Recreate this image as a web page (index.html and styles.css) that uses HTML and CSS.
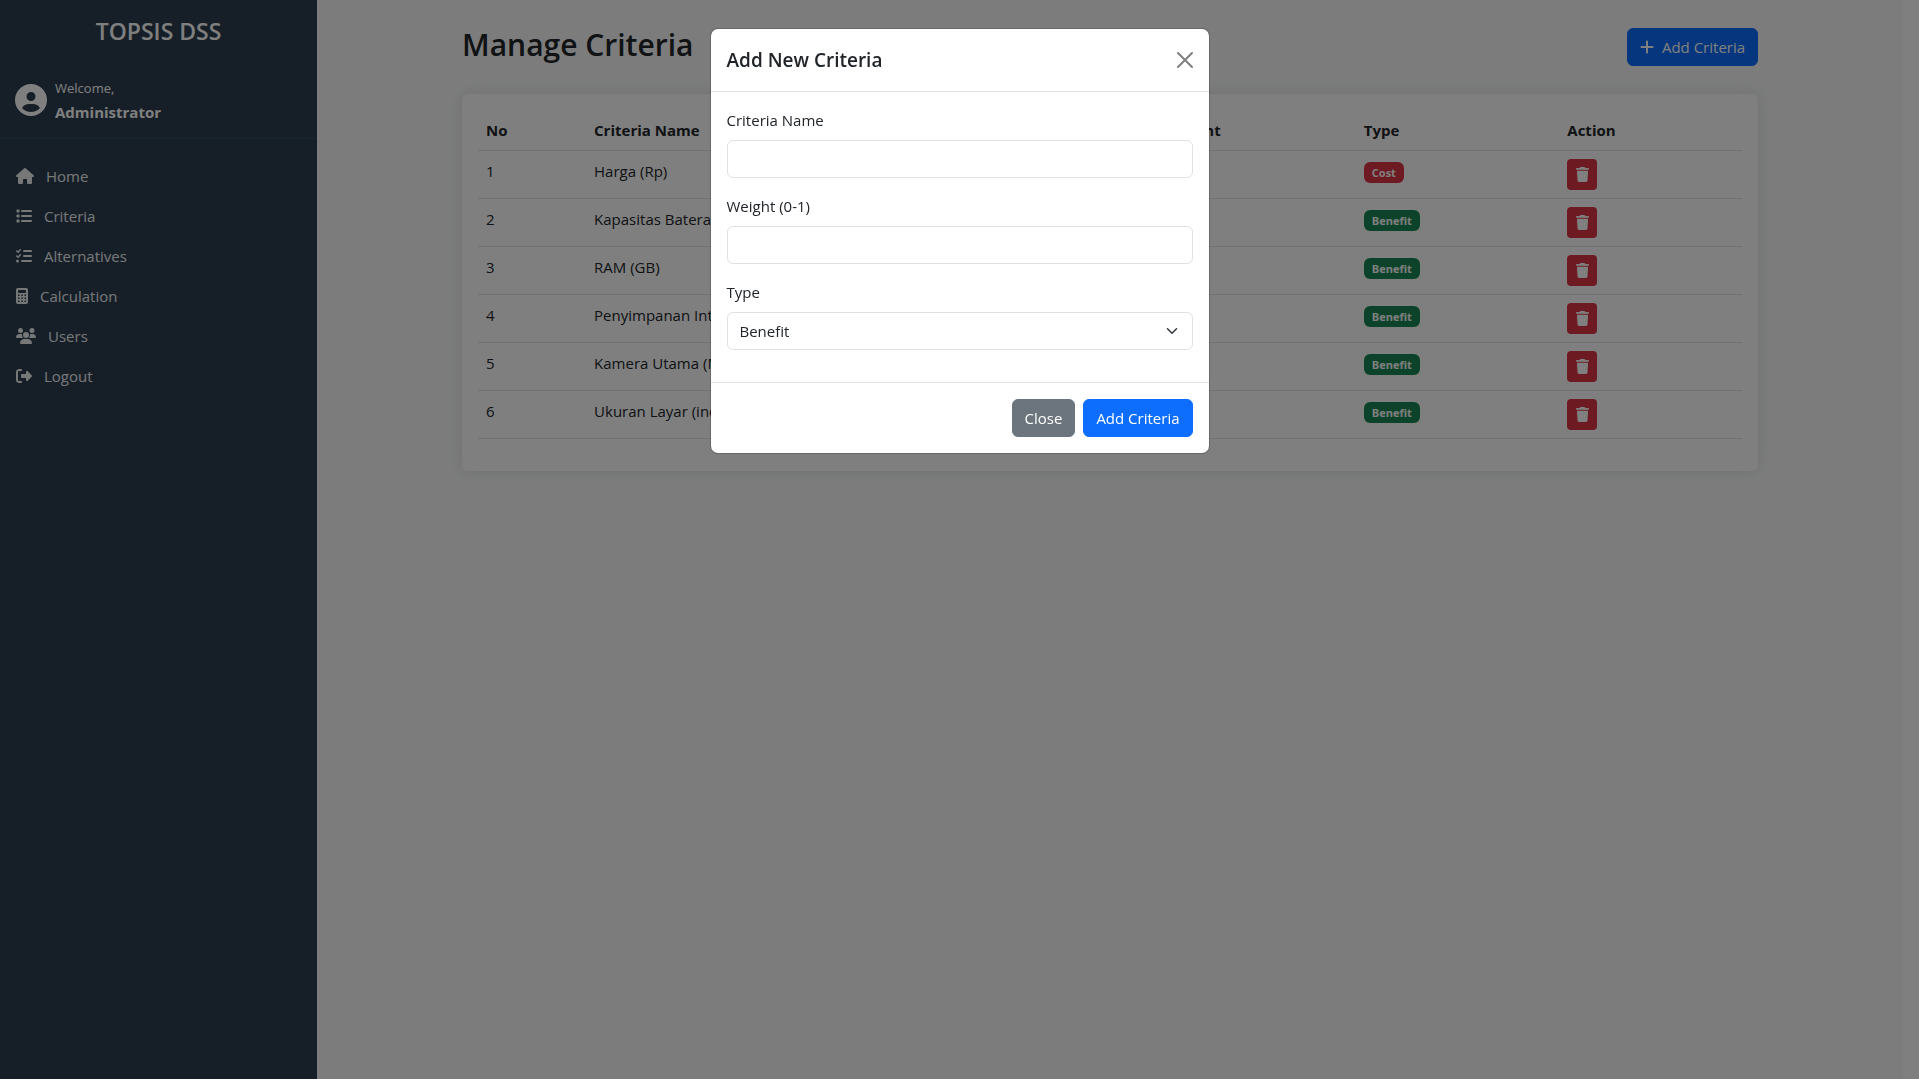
FILE: index.html
```html
<!DOCTYPE html>
<html lang="en">
<head>
  <meta charset="utf-8">
  <meta name="viewport" content="width=device-width, initial-scale=1">
  <title>Manage Criteria - TOPSIS DSS</title>
  <link rel="stylesheet" href="styles.css">
</head>
<body>
  <svg class="sprite" aria-hidden="true">
    <symbol id="user" viewBox="0 0 512 512"><path d="M399 384.2C376.9 345.8 335.4 320 288 320H224c-47.4 0-88.9 25.8-111 64.2c35.2 39.2 86.2 63.8 143 63.8s107.8-24.7 143-63.8zM0 256a256 256 0 1 1 512 0A256 256 0 1 1 0 256zm256 16a72 72 0 1 0 0-144 72 72 0 1 0 0 144z"/></symbol>
    <symbol id="home" viewBox="0 0 576 512"><path d="M575.8 255.5c0 18-15 32.1-32 32.1h-32l.7 160.2c0 2.7-.2 5.4-.5 8.1V472c0 22.1-17.9 40-40 40H456c-1.1 0-2.2 0-3.3-.1c-1.4 .1-2.8 .1-4.2 .1H416 392c-22.1 0-40-17.9-40-40V448 384c0-17.7-14.3-32-32-32H256c-17.7 0-32 14.3-32 32v64 24c0 22.1-17.9 40-40 40H160 128.1c-1.5 0-3-.1-4.5-.2c-1.2 .1-2.4 .2-3.6 .2H104c-22.1 0-40-17.9-40-40V360c0-.9 0-1.9 .1-2.8V287.6H32c-18 0-32-14-32-32.1c0-9 3-17 10-24L266.4 8c7-7 15-8 22-8s15 2 21 7L564.8 231.5c8 7 12 15 11 24z"/></symbol>
    <symbol id="list" viewBox="0 0 512 512"><rect x="16" y="48" width="96" height="96" rx="24"/><rect x="16" y="208" width="96" height="96" rx="24"/><rect x="16" y="368" width="96" height="96" rx="24"/><rect x="160" y="64" width="352" height="64" rx="32"/><rect x="160" y="224" width="352" height="64" rx="32"/><rect x="160" y="384" width="352" height="64" rx="32"/></symbol>
    <symbol id="checks" viewBox="0 0 512 512"><path d="M24 96l42 38 70-78M24 256l42 38 70-78" fill="none" stroke="currentColor" stroke-width="48" stroke-linecap="round" stroke-linejoin="round"/><circle cx="48" cy="416" r="48"/><rect x="224" y="64" width="288" height="64" rx="32"/><rect x="224" y="224" width="288" height="64" rx="32"/><rect x="160" y="384" width="352" height="64" rx="32"/></symbol>
    <symbol id="calculator" viewBox="0 0 384 512"><path fill-rule="evenodd" d="M64 0H320a64 64 0 0 1 64 64V448a64 64 0 0 1-64 64H64a64 64 0 0 1-64-64V64A64 64 0 0 1 64 0zM96 64a32 32 0 0 0-32 32v32a32 32 0 0 0 32 32H288a32 32 0 0 0 32-32V96a32 32 0 0 0-32-32zM64 208h48v48H64zM168 208h48v48h-48zM272 208h48v48h-48zM64 304h48v48H64zM168 304h48v48h-48zM272 304h48v48h-48zM64 400h48v48H64zM168 400h48v48h-48zM272 400h48v48h-48z"/></symbol>
    <symbol id="users" viewBox="0 0 640 512"><path d="M144 0a80 80 0 1 1 0 160A80 80 0 1 1 144 0zM512 0a80 80 0 1 1 0 160A80 80 0 1 1 512 0zM0 298.7C0 239.8 47.8 192 106.7 192h42.7c15.9 0 31 3.5 44.6 9.7c-1.3 7.2-1.9 14.7-1.9 22.3c0 38.2 16.8 72.5 43.3 96c-.2 0-.4 0-.7 0H21.3C9.6 320 0 310.4 0 298.7zM405.3 320c-.2 0-.4 0-.7 0c26.6-23.5 43.3-57.8 43.3-96c0-7.6-.7-15-1.9-22.3c13.6-6.3 28.7-9.7 44.6-9.7h42.7C592.2 192 640 239.8 640 298.7c0 11.8-9.6 21.3-21.3 21.3H405.3zM224 224a96 96 0 1 1 192 0 96 96 0 1 1 -192 0zM128 485.3C128 411.7 187.7 352 261.3 352H378.7C452.3 352 512 411.7 512 485.3c0 14.7-11.9 26.7-26.7 26.7H154.7c-14.7 0-26.7-11.9-26.7-26.7z"/></symbol>
    <symbol id="logout" viewBox="0 0 512 512"><path d="M377.9 105.9L500.7 228.7c7.2 7.2 11.3 17.1 11.3 27.3s-4.1 20.1-11.3 27.3L377.9 406.1c-6.4 6.4-15 9.9-24 9.9c-18.7 0-33.9-15.2-33.9-33.9l0-62.1-128 0c-17.7 0-32-14.3-32-32l0-64c0-17.7 14.3-32 32-32l128 0 0-62.1c0-18.7 15.2-33.9 33.9-33.9c9 0 17.6 3.6 24 9.9zM160 96L96 96c-17.7 0-32 14.3-32 32l0 256c0 17.7 14.3 32 32 32l64 0c17.7 0 32 14.3 32 32s-14.3 32-32 32l-64 0c-53 0-96-43-96-96L0 128C0 75 43 32 96 32l64 0c17.7 0 32 14.3 32 32s-14.3 32-32 32z"/></symbol>
    <symbol id="plus" viewBox="0 0 448 512"><path d="M256 80c0-17.7-14.3-32-32-32s-32 14.3-32 32V224H48c-17.7 0-32 14.3-32 32s14.3 32 32 32H192V432c0 17.7 14.3 32 32 32s32-14.3 32-32V288H400c17.7 0 32-14.3 32-32s-14.3-32-32-32H256V80z"/></symbol>
    <symbol id="trash" viewBox="0 0 448 512"><path d="M135.2 17.7L128 32H32C14.3 32 0 46.3 0 64S14.3 96 32 96H416c17.7 0 32-14.3 32-32s-14.3-32-32-32H320l-7.2-14.3C307.4 6.8 296.3 0 284.2 0H163.8c-12.1 0-23.2 6.8-28.6 17.7zM416 128H32L53.2 467c1.6 25.3 22.6 45 47.9 45H346.9c25.3 0 46.3-19.7 47.9-45L416 128z"/></symbol>
    <symbol id="close" viewBox="0 0 16 16"><path d="M1 1l14 14M15 1L1 15" fill="none" stroke="currentColor" stroke-width="2" stroke-linecap="round"/></symbol>
    <symbol id="chevron" viewBox="0 0 16 16"><path d="M2 5l6 6 6-6" fill="none" stroke="currentColor" stroke-width="2" stroke-linecap="round" stroke-linejoin="round"/></symbol>
  </svg>

  <div class="layout">
    <aside class="sidebar">
      <h1 class="brand">TOPSIS DSS</h1>
      <div class="profile">
        <svg class="avatar" aria-hidden="true"><use href="#user"/></svg>
        <div>
          <div class="welcome">Welcome,</div>
          <div class="username">Administrator</div>
        </div>
      </div>
      <nav class="menu">
        <a class="menu-link" href="#"><svg class="icon icon-18" aria-hidden="true"><use href="#home"/></svg>Home</a>
        <a class="menu-link" href="#"><svg class="icon icon-16" aria-hidden="true"><use href="#list"/></svg>Criteria</a>
        <a class="menu-link" href="#"><svg class="icon icon-16" aria-hidden="true"><use href="#checks"/></svg>Alternatives</a>
        <a class="menu-link" href="#"><svg class="icon icon-12" aria-hidden="true"><use href="#calculator"/></svg>Calculation</a>
        <a class="menu-link" href="#"><svg class="icon icon-20" aria-hidden="true"><use href="#users"/></svg>Users</a>
        <a class="menu-link" href="#"><svg class="icon icon-16" aria-hidden="true"><use href="#logout"/></svg>Logout</a>
      </nav>
    </aside>

    <main class="main">
      <div class="container">
        <header class="page-header">
          <h2 class="page-title">Manage Criteria</h2>
          <button class="btn btn-primary" type="button"><svg class="icon icon-14" aria-hidden="true"><use href="#plus"/></svg>Add Criteria</button>
        </header>
        <section class="card">
          <table class="table">
            <colgroup><col class="col-no"><col class="col-name"><col class="col-weight"><col class="col-type"><col></colgroup>
            <thead>
              <tr><th scope="col">No</th><th scope="col">Criteria Name</th><th scope="col">Weight</th><th scope="col">Type</th><th scope="col">Action</th></tr>
            </thead>
            <tbody>
              <tr><td>1</td><td>Harga (Rp)</td><td></td><td><span class="badge badge-cost">Cost</span></td><td><button class="btn-delete" type="button" aria-label="Delete"><svg class="icon-trash" aria-hidden="true"><use href="#trash"/></svg></button></td></tr>
              <tr><td>2</td><td>Kapasitas Baterai</td><td></td><td><span class="badge">Benefit</span></td><td><button class="btn-delete" type="button" aria-label="Delete"><svg class="icon-trash" aria-hidden="true"><use href="#trash"/></svg></button></td></tr>
              <tr><td>3</td><td>RAM (GB)</td><td></td><td><span class="badge">Benefit</span></td><td><button class="btn-delete" type="button" aria-label="Delete"><svg class="icon-trash" aria-hidden="true"><use href="#trash"/></svg></button></td></tr>
              <tr><td>4</td><td>Penyimpanan Internal</td><td></td><td><span class="badge">Benefit</span></td><td><button class="btn-delete" type="button" aria-label="Delete"><svg class="icon-trash" aria-hidden="true"><use href="#trash"/></svg></button></td></tr>
              <tr><td>5</td><td>Kamera Utama (MP)</td><td></td><td><span class="badge">Benefit</span></td><td><button class="btn-delete" type="button" aria-label="Delete"><svg class="icon-trash" aria-hidden="true"><use href="#trash"/></svg></button></td></tr>
              <tr><td>6</td><td>Ukuran Layar (inch)</td><td></td><td><span class="badge">Benefit</span></td><td><button class="btn-delete" type="button" aria-label="Delete"><svg class="icon-trash" aria-hidden="true"><use href="#trash"/></svg></button></td></tr>
            </tbody>
          </table>
        </section>
      </div>
    </main>
  </div>

  <div class="modal-layer">
    <form class="modal" role="dialog" aria-modal="true" aria-labelledby="modal-title">
      <div class="modal-header">
        <h5 class="modal-title" id="modal-title">Add New Criteria</h5>
        <button class="btn-close" type="button" aria-label="Close dialog"><svg class="icon icon-16" aria-hidden="true"><use href="#close"/></svg></button>
      </div>
      <div class="modal-body">
        <div class="field">
          <label for="name">Criteria Name</label>
          <input class="control" id="name" type="text">
        </div>
        <div class="field">
          <label for="weight">Weight (0-1)</label>
          <input class="control" id="weight" type="text" inputmode="decimal">
        </div>
        <div class="field">
          <label for="type">Type</label>
          <div class="select-wrap">
            <select class="control" id="type"><option>Benefit</option><option>Cost</option></select>
            <svg class="chevron" aria-hidden="true"><use href="#chevron"/></svg>
          </div>
        </div>
      </div>
      <div class="modal-footer">
        <button class="btn btn-secondary" type="button">Close</button>
        <button class="btn btn-primary" type="submit">Add Criteria</button>
      </div>
    </form>
  </div>
</body>
</html>
```
FILE: styles.css
```css
*,
*::before,
*::after {
  box-sizing: border-box;
}

body {
  margin: 0;
  padding-right: 16px;
  background: #fff;
  color: #212529;
  font: 400 15px/24px "Segoe UI", "Open Sans", "Noto Sans", sans-serif;
}

h1, h2, h5 {
  margin: 0;
  font-weight: 600;
}

button, input, select {
  font: inherit;
  color: inherit;
}

button {
  cursor: pointer;
}

svg {
  fill: currentColor;
  flex: none;
}

.sprite {
  display: none;
}

.icon { height: 16px; }
.icon-12 { width: 12px; }
.icon-14 { width: 14px; }
.icon-16 { width: 16px; }
.icon-18 { width: 18px; }
.icon-20 { width: 20px; }

/* Layout */
.layout {
  display: grid;
  grid-template-columns: minmax(0, 1fr) minmax(0, 5fr);
  min-height: 100vh;
  background: #f8f9fa;
}

.sidebar {
  background: #2c3e50;
  color: #fff;
}

.brand {
  padding: 16px;
  font-size: 23px;
  line-height: 30px;
  text-align: center;
}

.profile {
  display: flex;
  align-items: center;
  gap: 8px;
  padding: 14px 15px;
  border-bottom: 1px solid #2f4f5c;
}

.avatar {
  width: 32px;
  height: 32px;
}

.welcome {
  font-size: 13px;
}

.username {
  font-weight: 700;
}

.menu {
  display: flex;
  flex-direction: column;
  padding-top: 17px;
}

.menu-link {
  display: flex;
  align-items: center;
  gap: 12px;
  padding: 8px 16px;
  color: #ecf0f1;
  text-decoration: none;
}

.main {
  padding: 24px 12px;
}

.container {
  max-width: 1296px;
  margin: 0 auto;
}

.page-header {
  display: flex;
  justify-content: space-between;
  align-items: center;
  margin-bottom: 24px;
}

.page-title {
  margin-bottom: 4px;
  font-size: 30px;
  line-height: 42px;
}

/* Buttons */
.btn {
  display: inline-flex;
  align-items: center;
  gap: 8px;
  padding: 6px 12px;
  border: 1px solid transparent;
  border-radius: 6px;
  color: #fff;
}

.btn-primary {
  background: #0d6efd;
  border-color: #0d6efd;
}

.btn-secondary {
  background: #6c757d;
  border-color: #6c757d;
}

.btn-delete {
  display: flex;
  justify-content: center;
  align-items: center;
  width: 30px;
  height: 31px;
  padding: 0;
  border: 0;
  border-radius: 4px;
  background: #dc3545;
  color: #fff;
}

.icon-trash {
  width: 13px;
  height: 15px;
}

/* Criteria table */
.card {
  padding: 16px 16px 32px;
  border-radius: 6px;
  background: #fff;
  box-shadow: 0 0 15px rgba(0, 0, 0, 0.1);
}

.table {
  width: 100%;
  table-layout: fixed;
  border-collapse: collapse;
}

.table th,
.table td {
  padding: 8px;
  border-bottom: 1px solid #dee2e6;
  text-align: left;
  vertical-align: top;
}

.table th {
  font-weight: 700;
}

.col-no { width: 108px; }
.col-name { width: 45.4%; }
.col-weight { width: 15.5%; }
.col-type { width: 16.1%; }

.badge {
  display: inline-block;
  padding: 4px 8px;
  border-radius: 6px;
  background: #198754;
  color: #fff;
  font-size: 11px;
  font-weight: 700;
  line-height: 13px;
}

.badge-cost {
  background: #dc3545;
}

/* Dialog */
.modal-layer {
  position: fixed;
  inset: 0;
  overflow: auto;
  padding: 28px 16px;
  background: rgba(0, 0, 0, 0.5);
}

.modal {
  max-width: 500px;
  margin: 0 auto;
  border: 1px solid rgba(0, 0, 0, 0.175);
  border-radius: 8px;
  background: #fff;
  background-clip: padding-box;
}

.modal-header {
  display: flex;
  justify-content: space-between;
  align-items: center;
  padding: 16px;
  border-bottom: 1px solid #dee2e6;
}

.modal-title {
  font-size: 19px;
  line-height: 30px;
}

.btn-close {
  display: flex;
  padding: 0;
  border: 0;
  background: none;
  color: #000;
  opacity: 0.5;
}

.modal-body {
  display: flex;
  flex-direction: column;
  gap: 16px;
  padding: 16px 16px 32px;
}

.field {
  display: flex;
  flex-direction: column;
  gap: 8px;
}

.control {
  display: block;
  width: 100%;
  height: 38px;
  padding: 6px 12px;
  border: 1px solid #dee2e6;
  border-radius: 6px;
  background: #fff;
  appearance: none;
}

.select-wrap {
  position: relative;
}

.chevron {
  position: absolute;
  top: 13px;
  right: 15px;
  width: 12px;
  height: 12px;
  color: #343a40;
  pointer-events: none;
}

.modal-footer {
  display: flex;
  justify-content: flex-end;
  gap: 8px;
  padding: 16px;
  border-top: 1px solid #dee2e6;
}
```
